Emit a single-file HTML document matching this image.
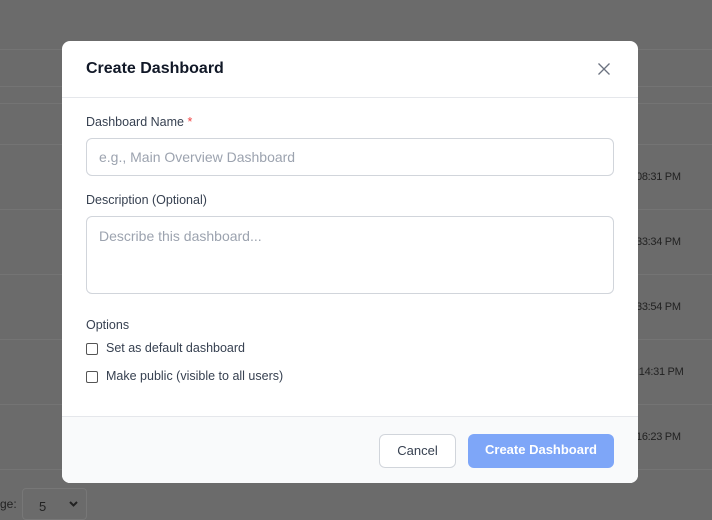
<!DOCTYPE html>
<html><head><style>
*{box-sizing:border-box;margin:0;padding:0}
body{width:712px;height:517px;overflow:hidden;background:#6b6b6b;font-family:"Liberation Sans",sans-serif;position:relative}
.ln{position:absolute;left:0;width:712px;height:1px;background:#747474}
.t{position:absolute;left:636px;font-size:11px;color:#222;letter-spacing:-0.3px}
.modal{position:absolute;left:62px;top:41px;width:576px;height:442px;background:#fff;border-radius:8px;overflow:hidden}
.hd{height:57px;border-bottom:1px solid #e5e7eb;position:relative}
.hd h2{position:absolute;left:24px;top:19px;font-size:16px;font-weight:bold;color:#111827}
.x{position:absolute;left:536px;top:22px}
.lbl{position:absolute;left:24px;font-size:12.5px;color:#374151}
.inp{position:absolute;left:24px;width:528px;border:1px solid #d1d5db;border-radius:6px;font-size:14px;color:#9ca3af;padding:0 12px}
.cb{position:absolute;left:24px;width:12px;height:12px;border:1px solid #555;border-radius:2px}
.ct{position:absolute;left:44px;font-size:12.5px;color:#374151}
.ft{position:absolute;left:0;top:375px;width:576px;height:67px;background:#f9fafb;border-top:1px solid #e5e7eb}
.btn{position:absolute;top:17px;height:34px;border-radius:6px;font-size:13px;text-align:center;line-height:32px}
</style></head><body>
<div class="ln" style="top:49px"></div>
<div class="ln" style="top:86px"></div>
<div class="ln" style="top:103px"></div>
<div class="ln" style="top:144px"></div>
<div class="ln" style="top:209px"></div>
<div class="ln" style="top:274px"></div>
<div class="ln" style="top:339px"></div>
<div class="ln" style="top:404px"></div>
<div class="ln" style="top:469px"></div>
<div class="t" style="top:171px">08:31 PM</div>
<div class="t" style="top:236px">33:34 PM</div>
<div class="t" style="top:301px">33:54 PM</div>
<div class="t" style="top:366px">:14:31 PM</div>
<div class="t" style="top:431px">16:23 PM</div>
<div style="position:absolute;left:0;top:497px;font-size:12px;color:#222">ge:</div>
<div style="position:absolute;left:22px;top:488px;width:65px;height:32px;border:1px solid #777;border-radius:4px;font-size:13px;color:#222;padding:10px 0 0 16px">5<svg style="position:absolute;left:46px;top:12px" width="9" height="6" viewBox="0 0 9 6"><path d="M1 1L4.5 4.5L8 1" stroke="#222" stroke-width="2" fill="none"/></svg></div>
<div class="modal">
<div class="hd"><h2>Create Dashboard</h2>
<svg class="x" width="12" height="12" viewBox="0 0 12 12"><path d="M0.5 0.5L11.5 11.5M11.5 0.5L0.5 11.5" stroke="#6b7280" stroke-width="1.3"/></svg></div>
<div class="lbl" style="top:74px">Dashboard Name <span style="color:#ef4444">*</span></div>
<div class="inp" style="top:97px;height:38px;line-height:36px">e.g., Main Overview Dashboard</div>
<div class="lbl" style="top:152px">Description (Optional)</div>
<div class="inp" style="top:175px;height:78px;padding-top:11px">Describe this dashboard...</div>
<div class="lbl" style="top:277px">Options</div>
<div class="cb" style="top:302px"></div><div class="ct" style="top:300px">Set as default dashboard</div>
<div class="cb" style="top:330px"></div><div class="ct" style="top:328px">Make public (visible to all users)</div>
<div class="ft">
<div class="btn" style="left:317px;width:77px;border:1px solid #d1d5db;background:#fff;color:#374151">Cancel</div>
<div class="btn" style="left:406px;width:146px;background:#7ea6f8;color:#fff;font-weight:bold">Create Dashboard</div>
</div>
</div>
</body></html>
